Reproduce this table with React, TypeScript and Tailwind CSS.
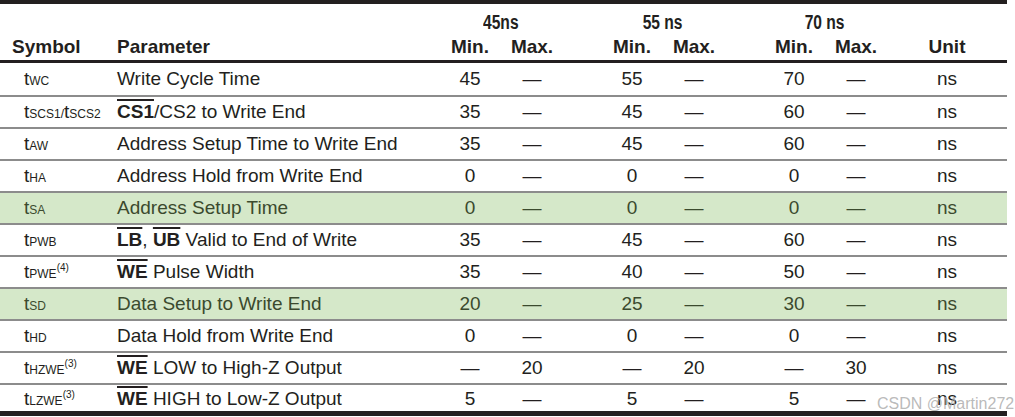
const cols =
  "grid grid-cols-[108px_331px_62px_62px_38px_62px_62px_38px_62px_62px_120px]";

type Row = {
  sym: React.ReactNode;
  param: React.ReactNode;
  vals: string[];
  green?: boolean;
};

const D = "—";

function Sym({ sub, sup }: { sub: string; sup?: string }) {
  return (
    <span>
      t<span className="text-[12px]">{sub}</span>
      {sup && <span className="text-[10px] align-[7px]">{sup}</span>}
    </span>
  );
}

function Ovl({ children }: { children: React.ReactNode }) {
  return <span className="font-bold overline decoration-[1.5px]">{children}</span>;
}

function Group({ label }: { label: string }) {
  return (
    <div className="col-span-2 text-center">
      <span className="inline-block scale-x-[0.78] text-[20px]">{label}</span>
    </div>
  );
}

const rows: Row[] = [
  { sym: <Sym sub="WC" />, param: "Write Cycle Time", vals: ["45", D, "55", D, "70", D] },
  {
    sym: (
      <span>
        t<span className="text-[12px]">SCS1/</span>t<span className="text-[12px]">SCS2</span>
      </span>
    ),
    param: (
      <>
        <Ovl>CS1</Ovl>/CS2 to Write End
      </>
    ),
    vals: ["35", D, "45", D, "60", D],
  },
  { sym: <Sym sub="AW" />, param: "Address Setup Time to Write End", vals: ["35", D, "45", D, "60", D] },
  { sym: <Sym sub="HA" />, param: "Address Hold from Write End", vals: ["0", D, "0", D, "0", D] },
  { sym: <Sym sub="SA" />, param: "Address Setup Time", vals: ["0", D, "0", D, "0", D], green: true },
  {
    sym: <Sym sub="PWB" />,
    param: (
      <>
        <Ovl>LB</Ovl>, <Ovl>UB</Ovl> Valid to End of Write
      </>
    ),
    vals: ["35", D, "45", D, "60", D],
  },
  {
    sym: <Sym sub="PWE" sup="(4)" />,
    param: (
      <>
        <Ovl>WE</Ovl> Pulse Width
      </>
    ),
    vals: ["35", D, "40", D, "50", D],
  },
  { sym: <Sym sub="SD" />, param: "Data Setup to Write End", vals: ["20", D, "25", D, "30", D], green: true },
  { sym: <Sym sub="HD" />, param: "Data Hold from Write End", vals: ["0", D, "0", D, "0", D] },
  {
    sym: <Sym sub="HZWE" sup="(3)" />,
    param: (
      <>
        <Ovl>WE</Ovl> LOW to High-Z Output
      </>
    ),
    vals: [D, "20", D, "20", D, "30"],
  },
  {
    sym: <Sym sub="LZWE" sup="(3)" />,
    param: (
      <>
        <Ovl>WE</Ovl> HIGH to Low-Z Output
      </>
    ),
    vals: ["5", D, "5", D, "5", D],
  },
];

export default function App() {
  return (
    <div className="relative w-[1015px] h-[417px] bg-white overflow-hidden font-['Liberation_Sans',Arial,sans-serif] text-[#231f20]">
      <div className="w-[1007px]">
        <div className="h-[4px] bg-[#231f20]" />

        {/* header */}
        <div className="pt-[8px] pb-[3px] border-b-[3px] border-[#231f20] font-bold text-[19px] leading-[21px]">
          <div className={cols}>
            <div className="col-span-2" />
            <Group label="45ns" />
            <div />
            <Group label="55 ns" />
            <div />
            <Group label="70 ns" />
            <div />
          </div>
          <div className={cols + " mt-[3px]"}>
            <div className="pl-[12px]">Symbol</div>
            <div className="pl-[9px]">Parameter</div>
            <div className="text-center">Min.</div>
            <div className="text-center">Max.</div>
            <div />
            <div className="text-center">Min.</div>
            <div className="text-center">Max.</div>
            <div />
            <div className="text-center">Min.</div>
            <div className="text-center">Max.</div>
            <div className="text-center">Unit</div>
          </div>
        </div>

        {/* body */}
        {rows.map((r, i) => (
          <div
            key={i}
            className={
              cols +
              " items-center text-[19px] " +
              (i > 0 ? "border-t-2 border-[#8c8c8c] " : "") +
              (i === rows.length - 1 ? "h-[28px] " : "h-[32px] ") +
              (r.green ? "bg-[#d5e8c9] text-[#3b4a2e]" : "")
            }
          >
            <div className="pl-[24px] whitespace-nowrap">{r.sym}</div>
            <div className="pl-[9px] whitespace-nowrap">{r.param}</div>
            <div className="text-center">{r.vals[0]}</div>
            <div className="text-center">{r.vals[1]}</div>
            <div />
            <div className="text-center">{r.vals[2]}</div>
            <div className="text-center">{r.vals[3]}</div>
            <div />
            <div className="text-center">{r.vals[4]}</div>
            <div className="text-center">{r.vals[5]}</div>
            <div className="text-center">ns</div>
          </div>
        ))}

        <div className="h-[5px] bg-[#231f20]" />
      </div>

      <div className="absolute left-[877px] top-[392px] text-[16px] text-[#a8a8a8]/80 font-['Liberation_Sans',sans-serif]">
        CSDN @Martin272
      </div>
    </div>
  );
}
